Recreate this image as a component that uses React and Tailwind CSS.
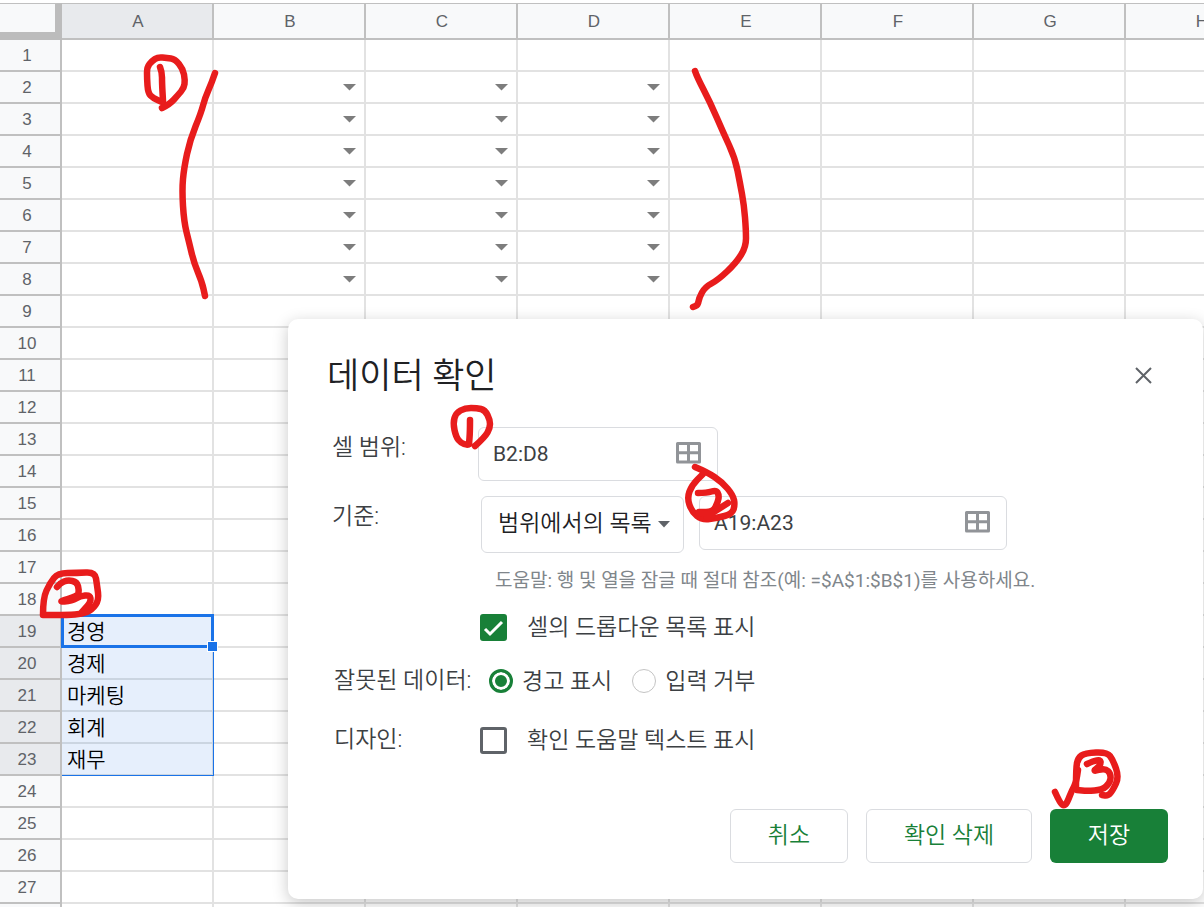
import { useState } from 'react'

const COLUMNS = ['A', 'B', 'C', 'D', 'E', 'F', 'G', 'H']
const ROWS = Array.from({ length: 28 }, (_, i) => i + 1)

const VALUES = {
  19: '경영',
  20: '경제',
  21: '마케팅',
  22: '회계',
  23: '재무',
}

// hand drawn marks, each one a list of points
const STROKES = [
  // 1 next to the range
  [[162, 108], [170, 104], [178, 95], [184, 88], [185, 80], [183, 69], [175, 59], [167, 58], [158, 57], [152, 61], [147, 67], [147, 78], [148, 93], [153, 98], [162, 102]],
  [[160, 67], [162, 72], [162, 83], [163, 101]],
  // left bracket
  [[215, 73], [212, 82], [205, 98], [201, 113], [190, 140], [184, 168], [182, 190], [184, 222], [189, 242], [194, 263], [202, 282], [205, 296]],
  // right bracket
  [[695, 71], [697, 77], [710, 102], [723, 132], [735, 158], [740, 183], [744, 205], [746, 230], [746, 247], [736, 263], [718, 280], [705, 287], [699, 298], [698, 305], [693, 307]],
  // 1 in the dialog
  [[475, 446], [485, 437], [490, 428], [490, 420], [485, 410], [477, 408], [465, 408], [456, 413], [453, 423], [456, 437], [461, 443], [467, 445], [469, 444]],
  [[470, 420], [470, 432], [469, 444]],
  // 2 in the dialog
  [[695, 467], [707, 472], [722, 482], [733, 495], [735, 505], [732, 514], [717, 518], [702, 520], [692, 512], [687, 498], [692, 485], [703, 474]],
  [[698, 493], [707, 493], [716, 490], [719, 495], [718, 502], [713, 512], [699, 512]],
  [[699, 513], [717, 515], [703, 519], [717, 510], [728, 503]],
  // 2 next to the list
  [[43, 615], [43, 598], [50, 583], [58, 573], [77, 573], [95, 572], [97, 585], [99, 600], [92, 610], [82, 614], [68, 615], [43, 615]],
  [[57, 587], [60, 583], [68, 580], [77, 582], [79, 590], [78, 596], [57, 602], [72, 601], [80, 596], [90, 595], [91, 602], [82, 612]],
  // 3 and tick
  [[1055, 792], [1060, 803], [1064, 806], [1067, 803], [1072, 790], [1076, 783], [1078, 770]],
  [[1076, 787], [1076, 768], [1078, 758], [1085, 753], [1107, 752], [1113, 760], [1119, 777], [1113, 790], [1108, 796], [1102, 795]],
  [[1087, 764], [1100, 758], [1101, 765], [1092, 772], [1105, 768], [1111, 774], [1110, 783], [1102, 790], [1087, 791], [1077, 790]],
]

function toPath(points) {
  let d = `M${points[0][0]} ${points[0][1]}`
  for (let i = 1; i < points.length - 1; i++) {
    const [x, y] = points[i]
    const [nx, ny] = points[i + 1]
    d += ` Q${x} ${y} ${(x + nx) / 2} ${(y + ny) / 2}`
  }
  const last = points[points.length - 1]
  return d + ` L${last[0]} ${last[1]}`
}

function Marks() {
  return (
    <svg className="absolute top-0 left-0 pointer-events-none" width="1204" height="907" fill="none" stroke="#e81c1c" strokeWidth="6.5" strokeLinecap="round" strokeLinejoin="round" aria-hidden="true">
      {STROKES.map((points, i) => (
        <path key={i} d={toPath(points)} />
      ))}
    </svg>
  )
}

function Cell({ col, row }) {
  const selected = col === 'A' && row >= 19 && row <= 23
  const hasDropdown = ['B', 'C', 'D'].includes(col) && row >= 2 && row <= 8

  if (selected) {
    return (
      <td className="relative h-8 p-0 pl-[5px] pt-0.5 border-r-2 border-b-2 border-[#cbd5e1] bg-[#e6effc] text-[21px] leading-7 font-[350] text-black">
        {VALUES[row]}
        <span className={`absolute top-0 left-0 -right-[2px] -bottom-[2px] border-r border-[#1a73e8] ${row === 23 ? 'border-b' : ''}`} />
        {row === 19 && (
          <>
            <span className="absolute -top-[2px] -left-px -right-[2px] -bottom-[2px] border-3 border-[#1a73e8]" />
            <span className="absolute -right-[6px] -bottom-[6px] z-10 size-[11px] border border-white bg-[#1a73e8]" />
          </>
        )}
      </td>
    )
  }

  return (
    <td className="h-8 p-0 border-r-2 border-b-2 border-[#e2e2e2]">
      {hasDropdown && (
        <button type="button" aria-label={`${col}${row}`} className="ml-auto mr-2 block">
          <svg width="13" height="7" viewBox="0 0 13 7" className="block">
            <path d="M0 0h13L6.500 6.500z" fill="#7d7d7d" />
          </svg>
        </button>
      )}
    </td>
  )
}

function Sheet() {
  return (
    <table className="w-[1278px] table-fixed border-separate border-spacing-0 font-['Liberation_Sans','Noto_Sans_CJK_KR',sans-serif]">
      <thead>
        <tr>
          <td className="w-[62px] h-[37px] p-0 border-t border-t-[#c0c0c0] border-r-7 border-b-8 border-r-[#bcbcbc] border-b-[#bcbcbc] bg-[#f8f9fa]" />
          {COLUMNS.map((col) => (
            <th key={col} scope="col" className={`w-38 h-[37px] p-0 pt-0.5 pl-0.5 border-t border-r-2 border-b-2 border-[#c0c0c0] text-[17px] font-normal text-[#5f6368] ${col === 'A' ? 'bg-[#e8eaed]' : 'bg-[#f8f9fa]'}`}>
              {col}
            </th>
          ))}
        </tr>
      </thead>
      <tbody>
        {ROWS.map((row) => (
          <tr key={row}>
            <th scope="row" className={`h-8 p-0 pt-0.5 pr-[6px] border-r-2 border-b-2 border-[#c0c0c0] text-[17px] leading-7 font-normal text-[#5f6368] ${row >= 19 && row <= 23 ? 'bg-[#e8eaed]' : 'bg-[#f8f9fa]'}`}>
              {row}
            </th>
            {COLUMNS.map((col) => (
              <Cell key={col} col={col} row={row} />
            ))}
          </tr>
        ))}
      </tbody>
    </table>
  )
}

function RangeInput({ id, label, value, onChange, className }) {
  return (
    <div className={`flex h-[54px] items-center rounded-md border border-[#dadce0] pl-[14px] pr-4 ${className}`}>
      <input
        id={id}
        type="text"
        aria-label={label}
        value={value}
        onChange={(e) => onChange(e.target.value)}
        className="min-w-0 flex-1 text-[21px] font-normal text-[#3c4043] outline-none"
      />
      <button type="button" aria-label="데이터 범위 선택">
        <svg width="25" height="22" viewBox="0 0 25 22" fill="none" stroke="#919498" strokeWidth="3" strokeLinejoin="round" className="mb-0.5 block">
          <path d="M1.500 1.500h22v18.500h-22zM12.500 1.500v18.500M1.500 10.700h22" />
        </svg>
      </button>
    </div>
  )
}

function Checkbox({ label, checked, onChange }) {
  return (
    <label className="flex items-center gap-5">
      <span className="relative">
        <input
          type="checkbox"
          checked={checked}
          onChange={(e) => onChange(e.target.checked)}
          className="block size-[27px] appearance-none rounded-[3px] border-3 border-[#5f6368] checked:border-[#188038] checked:bg-[#188038]"
        />
        {checked && (
          <svg className="absolute inset-0 pointer-events-none" width="27" height="27" fill="none" stroke="white" strokeWidth="3">
            <path d="M5 15l5 5L22 8" />
          </svg>
        )}
      </span>
      <span className="pt-0.5">{label}</span>
    </label>
  )
}

function Radio({ label, checked, onChange }) {
  return (
    <label className="flex items-center gap-[9px]">
      <input
        type="radio"
        name="invalid"
        checked={checked}
        onChange={onChange}
        className="block size-6 appearance-none rounded-full border border-[#c4c4c4] checked:border-3 checked:border-[#188038] checked:bg-[#188038] checked:shadow-[inset_0_0_0_3px_white]"
      />
      <span className="pt-0.5">{label}</span>
    </label>
  )
}

function ValidationDialog() {
  const [range, setRange] = useState('B2:D8')
  const [source, setSource] = useState('A19:A23')
  const [showList, setShowList] = useState(true)
  const [showHelp, setShowHelp] = useState(false)
  const [invalid, setInvalid] = useState('warn')

  return (
    <form
      role="dialog"
      aria-labelledby="dialog-title"
      onSubmit={(e) => e.preventDefault()}
      className="absolute top-[319px] right-px left-[288px] rounded-[10px] bg-white pt-9 pr-[35px] pb-9 pl-[37px] text-[23px] leading-7 font-[350] text-[#3c4043] shadow-[0_4px_16px_rgba(0,0,0,0.22)] font-['Roboto','Noto_Sans_CJK_KR',sans-serif]"
    >
      <div className="flex items-center justify-between">
        <h1 id="dialog-title" className="h-10 pt-0.5 pl-0.5 text-[35px] leading-10 text-[#202124]">데이터 확인</h1>
        <button type="button" aria-label="닫기" className="mr-4">
          <svg width="17" height="17" fill="none" stroke="#5f6368" strokeWidth="2" className="block">
            <path d="M1 1l15 15M16 1L1 16" />
          </svg>
        </button>
      </div>

      <div className="pl-[7px]">
        <div className="mt-8 flex items-start">
          <label htmlFor="range" className="w-[146px] pt-px leading-10">셀 범위:</label>
          <RangeInput id="range" label="셀 범위" value={range} onChange={setRange} className="w-60" />
        </div>

        <div className="mt-[15px] flex items-start">
          <label htmlFor="criteria" className="w-[149px] pt-px leading-10">기준:</label>
          <div className="relative">
            <select id="criteria" className="block h-[57px] w-[203px] appearance-none rounded-md border border-[#dadce0] bg-white pr-8 pb-0.5 pl-4 text-[#202124]">
              <option>범위에서의 목록</option>
            </select>
            <svg className="absolute top-[25px] right-[14px] pointer-events-none" width="12" height="7">
              <path d="M0 0h12L6 6.500z" fill="#5f6368" />
            </svg>
          </div>
          <RangeInput id="source" label="목록 범위" value={source} onChange={setSource} className="ml-[15px] w-[308px]" />
        </div>

        <p className="mt-4 pl-[163px] text-[19px] leading-6 font-normal text-[#80868b]">
          도움말: 행 및 열을 잠글 때 절대 참조(예: =$A$1:$B$1)를 사용하세요.
        </p>

        <div className="mt-[19px] pl-[148px]">
          <Checkbox label="셀의 드롭다운 목록 표시" checked={showList} onChange={setShowList} />
        </div>

        <div className="mt-6 flex items-center">
          <span className="w-[157px] pl-0.5">잘못된 데이터:</span>
          <Radio label="경고 표시" checked={invalid === 'warn'} onChange={() => setInvalid('warn')} />
          <span className="w-5" />
          <Radio label="입력 거부" checked={invalid === 'reject'} onChange={() => setInvalid('reject')} />
        </div>

        <div className="mt-[29px] flex items-center">
          <span className="w-[148px] pl-0.5">디자인:</span>
          <Checkbox label="확인 도움말 텍스트 표시" checked={showHelp} onChange={setShowHelp} />
        </div>
      </div>

      <div className="mt-[54px] flex justify-end gap-[18px]">
        <button type="button" className="h-[54px] w-[118px] rounded-md border border-[#dadce0] pb-px text-[#188038]">취소</button>
        <button type="button" className="h-[54px] w-[166px] rounded-md border border-[#dadce0] pb-px text-[#188038]">확인 삭제</button>
        <button type="submit" className="h-[54px] w-[118px] rounded-md bg-[#188038] pb-px text-white">저장</button>
      </div>
    </form>
  )
}

function App() {
  return (
    <div className="relative h-screen overflow-hidden bg-white pt-[3px]">
      <Sheet />
      <ValidationDialog />
      <Marks />
    </div>
  )
}

export default App
